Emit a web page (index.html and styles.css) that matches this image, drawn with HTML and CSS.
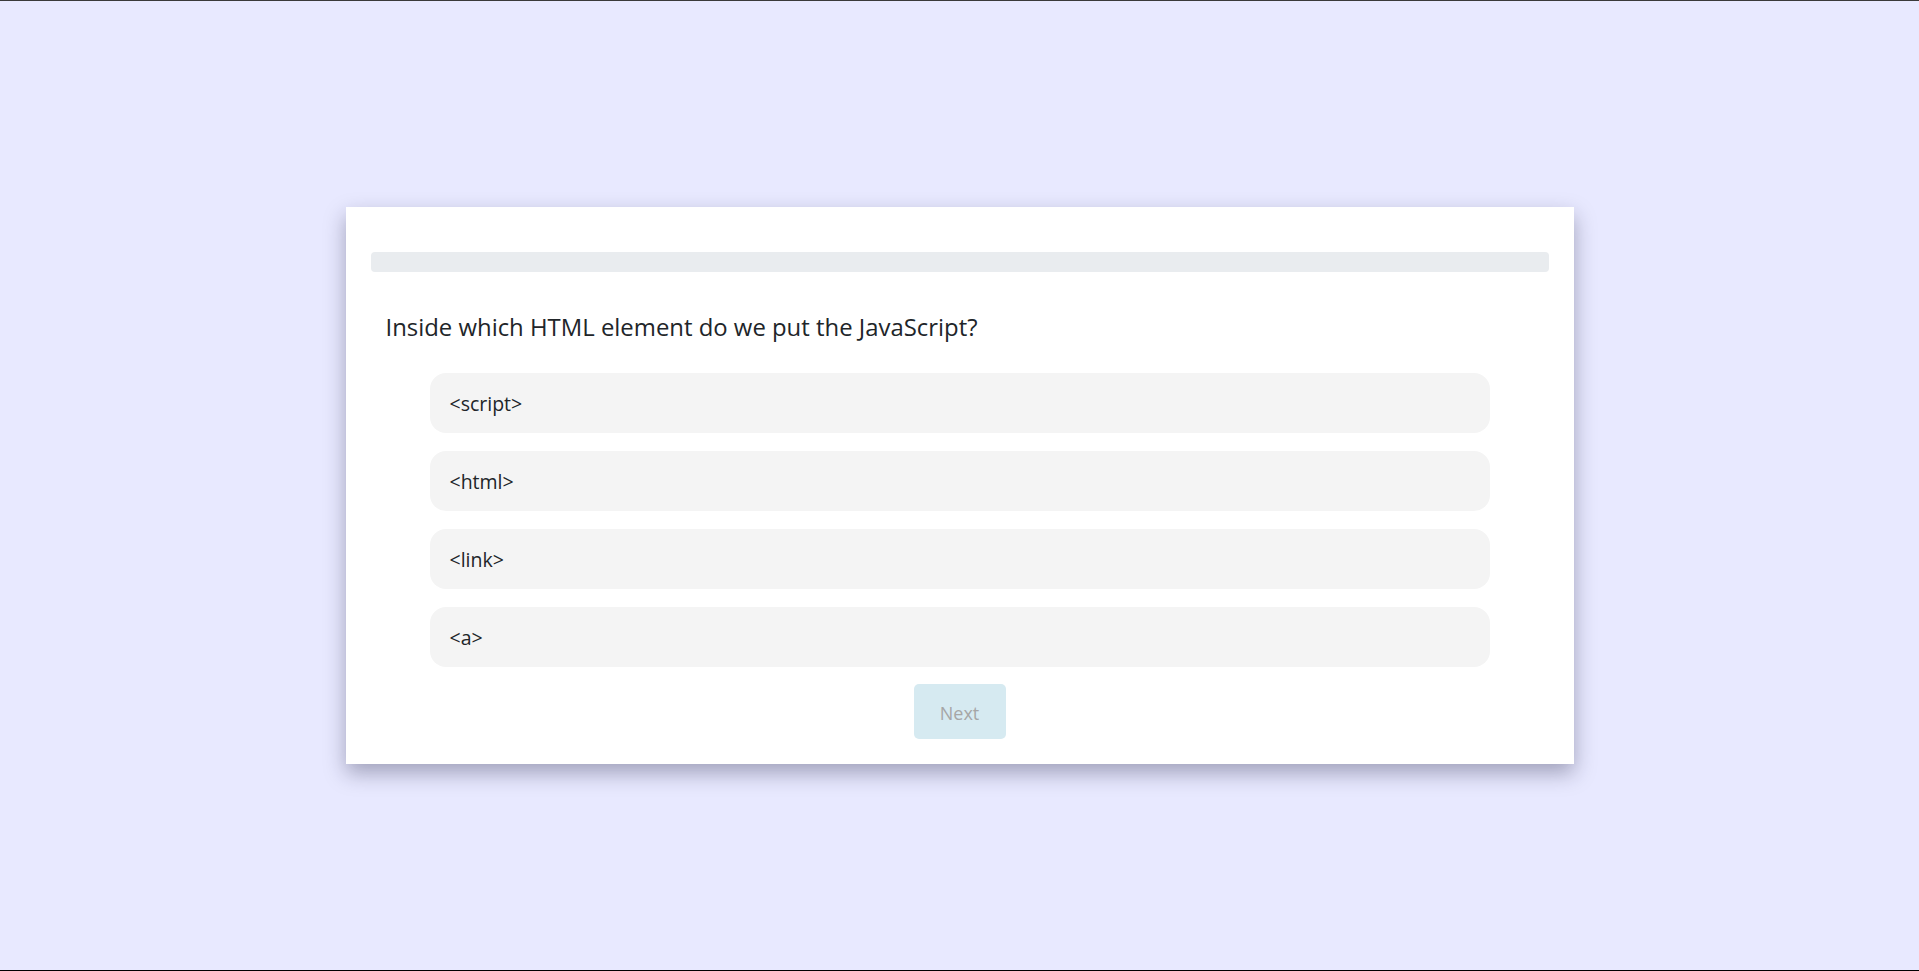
FILE: index.html
```html
<!DOCTYPE html>
<html lang="en">
<head>
<meta charset="utf-8">
<title>Quiz</title>
<link rel="stylesheet" href="styles.css">
</head>
<body>
<div class="page">
  <main class="card">
    <div class="progress"><div class="progress-bar"></div></div>
    <h2 class="question">Inside which HTML element do we put the JavaScript?</h2>
    <div class="options">
      <div class="option">&lt;script&gt;</div>
      <div class="option">&lt;html&gt;</div>
      <div class="option">&lt;link&gt;</div>
      <div class="option">&lt;a&gt;</div>
    </div>
    <div class="actions">
      <button class="next" disabled>Next</button>
    </div>
  </main>
</div>
</body>
</html>
```

FILE: styles.css
```css
* { box-sizing: border-box; }
html, body { margin: 0; padding: 0; }
body {
  font-family: "Segoe UI", "Open Sans", "Noto Sans", sans-serif;
  color: #212529;
  background: #e8e9ff;
  overflow: hidden;
}
.page {
  height: 971px;
  border-top: 1px solid #3a3a3a;
  border-bottom: 1px solid #000;
  display: flex;
  align-items: center;
  justify-content: center;
}
.card {
  width: 1228px;
  background: #fff;
  padding: 45px 25px 25px;
  box-shadow: 0 9px 20px rgba(30, 30, 60, 0.35);
}
.progress {
  height: 20px;
  background: #e9ecef;
  border-radius: 4px;
  overflow: hidden;
}
.progress-bar { width: 0; height: 100%; background: #0d6efd; }
.question {
  margin: 0;
  padding: 37px 15px 0;
  font-size: 23.9px;
  font-weight: 400;
  line-height: 1.5;
}
.options {
  margin: 28px 59px 0;
  display: flex;
  flex-direction: column;
  gap: 18px;
}
.option {
  height: 60px;
  background: #f4f4f4;
  border-radius: 16px;
  padding: 2px 20px 0;
  display: flex;
  align-items: center;
  font-size: 19.5px;
}
.actions {
  display: flex;
  justify-content: center;
  margin-top: 17px;
}
.next {
  width: 92px;
  height: 55px;
  border: none;
  border-radius: 5px;
  background: #d6eaf1;
  color: #a6a6a6;
  font-family: inherit;
  font-size: 18px;
  padding: 3px 0 0;
}
```
